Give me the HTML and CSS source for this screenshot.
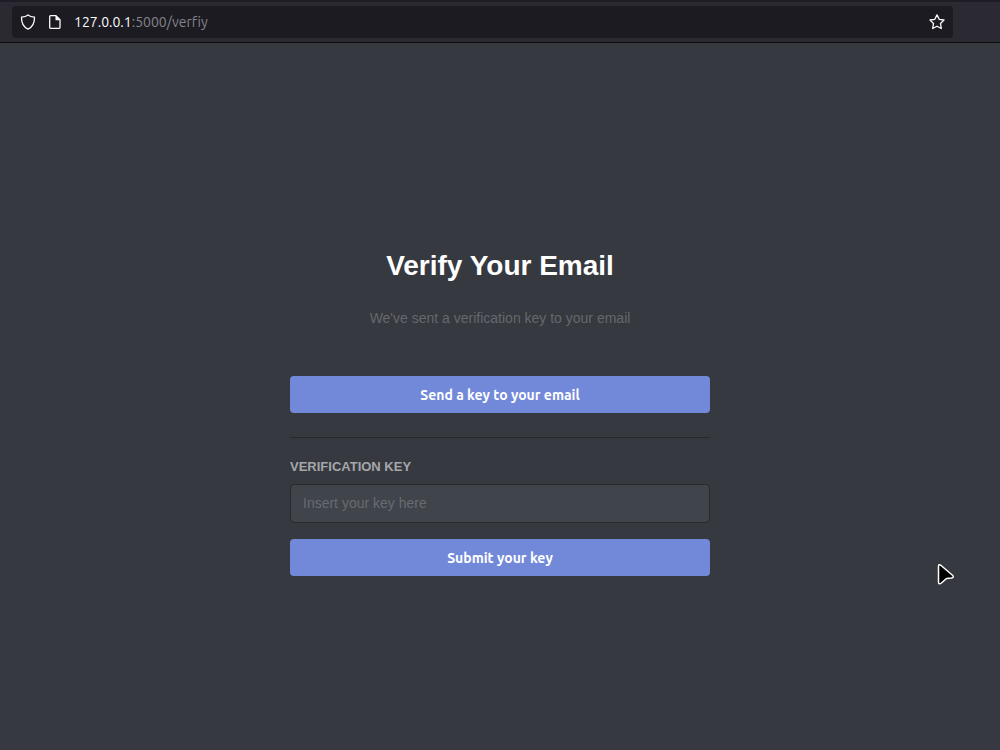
FILE: index.html
```html
<!DOCTYPE html>
<html lang="en">
<head>
<meta charset="utf-8">
<meta name="viewport" content="width=device-width, initial-scale=1">
<title>Verify Your Email</title>
<link rel="stylesheet" href="styles.css">
</head>
<body>
<header class="toolbar">
  <div class="address">
    <svg class="icon" viewBox="0 0 16 16" aria-hidden="true"><path d="M8 .9C6.300 2.300 4.300 2.900 1.500 3.100C1.300 8.700 3.200 13 8 15.200C12.800 13 14.700 8.700 14.500 3.100C11.700 2.900 9.700 2.300 8 .9Z"/></svg>
    <svg class="icon" viewBox="0 0 16 16" aria-hidden="true"><path d="M3.500 1.700H9L13 5.700V13.500Q13 14.300 12.200 14.300H3.500Q2.700 14.300 2.700 13.500V2.500Q2.700 1.700 3.500 1.700Z"/><path class="fold" d="M8.500 1.500V6.200H13.300Z"/></svg>
    <div class="url"><span class="host">127.0.0.1</span>:5000/verfiy</div>
    <button class="bookmark" type="button" aria-label="Bookmark this page"><svg class="icon" viewBox="0 0 16 16" aria-hidden="true"><path d="M8 .9L10.200 5.300L15 6L11.500 9.500L12.300 14.500L8 12.200L3.700 14.500L4.500 9.500L1 6L5.800 5.300Z"/></svg></button>
  </div>
</header>
<main class="page">
  <div class="panel">
    <h1 class="title">Verify Your Email</h1>
    <p class="subtitle">We've sent a verification key to your email</p>
    <button class="action" type="button">Send a key to your email</button>
    <hr class="divider">
    <form class="form">
      <label class="label" for="key">VERIFICATION KEY</label>
      <input class="field" id="key" type="text" placeholder="Insert your key here">
      <button class="action" type="submit">Submit your key</button>
    </form>
  </div>
</main>
<svg class="pointer" viewBox="0 0 20 24" aria-hidden="true"><path d="M2.500 3.600Q2.500 .6 4.800 2.300L16.500 12.300Q18.500 14.400 15.500 15L10.500 15.500L5.400 20Q2.500 22 2.500 19Z"/></svg>
</body>
</html>
```

FILE: styles.css
```css
* {
  box-sizing: border-box;
}

body {
  display: flex;
  flex-direction: column;
  min-height: 100vh;
  margin: 0;
  background: #36393f;
  font-family: "Liberation Sans", Arial, sans-serif;
  font-size: 14px;
}

.toolbar {
  padding: 4px 47px 4px 12px;
  background: #2b2a33;
  border-top: 2px solid #1e1d25;
  border-bottom: 1px solid #0c0c0e;
}

.address {
  display: flex;
  align-items: center;
  gap: 11px;
  min-height: 32px;
  padding: 0 8px;
  border-radius: 4px;
  background: #1c1b22;
}

.icon {
  display: block;
  width: 16px;
  height: 16px;
  fill: none;
  stroke: #fbfbfe;
  stroke-width: 1.3;
  stroke-linejoin: round;
}

.fold {
  fill: #fbfbfe;
  stroke: none;
}

.url {
  flex: 1;
  font-family: Ubuntu, "Noto Sans", sans-serif;
  font-size: 14px;
  line-height: 18px;
  font-variant-ligatures: none;
  color: #85858c;
}

.host {
  color: #fbfbfe;
}

.bookmark {
  padding: 0;
  border: 0;
  background: none;
}

.page {
  display: flex;
  flex: 1;
  flex-direction: column;
  align-items: center;
  justify-content: center;
  padding: 33px 16px 0;
}

.panel {
  width: 100%;
  max-width: 420px;
  padding: 24px 0;
}

.title {
  margin: 0 0 26px;
  font-size: 28px;
  line-height: 32px;
  text-align: center;
  color: #fff;
}

.subtitle {
  margin: 0 0 48px;
  line-height: 20px;
  text-align: center;
  color: #65686e;
}

.action {
  display: block;
  width: 100%;
  height: 37px;
  padding: 1px 12px 0;
  border: 0;
  border-radius: 4px;
  background: #7289da;
  font-family: Ubuntu, "Noto Sans", sans-serif;
  font-size: 14px;
  font-weight: 700;
  color: #fff;
}

.divider {
  margin: 24px 0 20px;
  border: 0;
  border-top: 1px solid #27292d;
}

.label {
  display: block;
  margin-bottom: 8px;
  font-size: 13px;
  font-weight: 700;
  line-height: 18px;
  color: #a5a7aa;
}

.field {
  display: block;
  width: 100%;
  height: 39px;
  margin-bottom: 16px;
  padding: 0 12px 2px;
  border: 1px solid #282a2e;
  border-radius: 4px;
  background: #40444b;
  font: inherit;
  color: #dcddde;
}

.field::placeholder {
  color: #686b71;
  opacity: 1;
}

.pointer {
  position: absolute;
  top: 563px;
  left: 936px;
  width: 20px;
  height: 24px;
  fill: #000;
  stroke: #fff;
  stroke-width: 1.5;
  stroke-linejoin: round;
  pointer-events: none;
}
```
